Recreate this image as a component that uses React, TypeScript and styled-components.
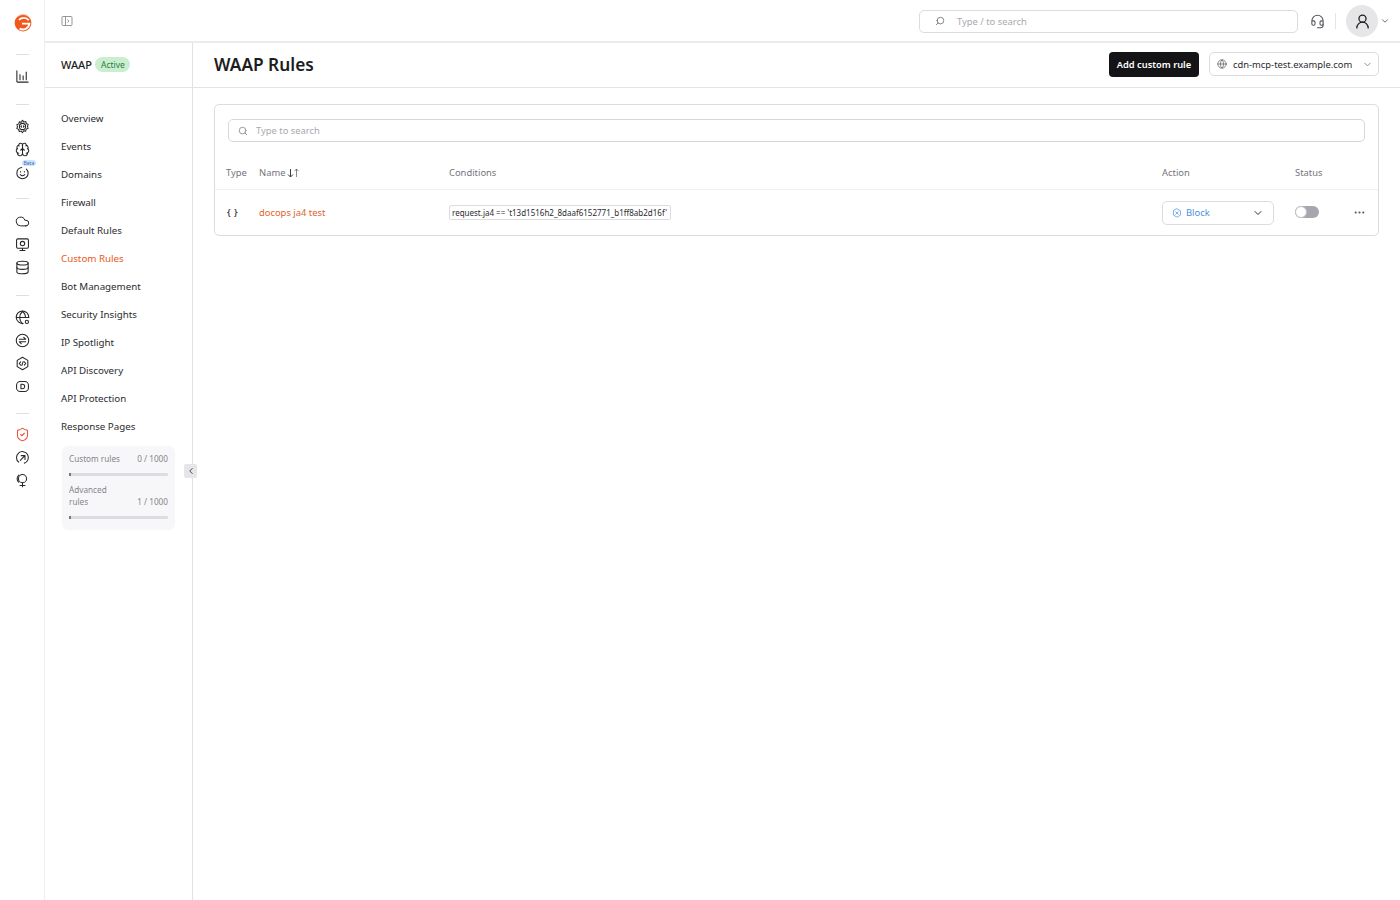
import React from "react";
import styled, { createGlobalStyle } from "styled-components";
import { Search, ChevronDown, ChevronLeft, Globe, Cloud, Database, ShieldCheck, Brain, UserRound, Headset, Ellipsis } from "lucide-react";

const Global = createGlobalStyle`
  html, body { margin: 0; padding: 0; background: #fff; }
  body { font-family: "Noto Sans", "Open Sans", sans-serif; color: #1d1d20; }
  #root { height: 900px; overflow: hidden; }
`;

const Page = styled.div`display: flex; height: 900px;`;
const Rail = styled.nav`
  flex: none; border-right: 1px solid #eeeef0;
  display: flex; flex-direction: column; align-items: center; padding: 12px 0 0 1px; box-sizing: border-box; width: 45px;
`;
const Logo = styled.div`height: 22px; display: flex; align-items: center; justify-content: center; margin-bottom: 20px;`;
const RailDivider = styled.div`width: 13px; height: 1px; background: #dfdfe2; flex: none;`;
const RailGroup = styled.div<{ $top: number; $bottom: number }>`
  display: flex; flex-direction: column; gap: 9px; align-items: center;
  padding: ${p => p.$top}px 0 ${p => p.$bottom}px;
`;
const RailIcon = styled.div<{ $active?: boolean }>`
  width: 14px; height: 14px; position: relative; color: ${p => (p.$active ? "#e8553a" : "#26262b")};
  display: flex; align-items: center; justify-content: center;
  svg { display: block; flex: none; }
`;
const BetaTag = styled.span`
  position: absolute; left: 6px; top: -5px; height: 6px; padding: 0 2px; border-radius: 3px;
  background: #cfe3fb; color: #2f6fc4; font-size: 5px; line-height: 6px;
`;

const Content = styled.div`flex: 1; min-width: 0; display: flex; flex-direction: column;`;
const TopBar = styled.header`
  height: 43px; flex: none; border-bottom: 2px solid #ebebed; display: flex; align-items: center;
  padding: 1px 10px 0 16px; box-sizing: border-box;
`;
const TopLeft = styled.div`flex: 1; color: #8b8b92; display: flex; align-items: center;`;
const GlobalSearch = styled.div`
  width: 379px; height: 23px; box-sizing: border-box; border: 1px solid #dcdce0; border-radius: 5px;
  display: flex; align-items: center; padding-left: 15px; gap: 12px; color: #6d6d74;
  font-size: 9.4px; margin-right: 12px;
`;
const Placeholder = styled.span`color: #a9a9b0;`;
const VLine = styled.div`width: 1px; height: 16px; background: #e4e4e7; margin: 0 10px 0 10px;`;
const Avatar = styled.div`
  width: 32px; height: 32px; border-radius: 50%; background: #e6e6e9; display: flex; align-items: center; justify-content: center;
  color: #1d1d20;
`;
const AvatarChevron = styled.div`display: flex; margin-left: 2px; color: #55555c;`;

const Body = styled.div`flex: 1; display: flex; min-height: 0;`;
const Side = styled.aside`
  width: 148px; flex: none; box-sizing: border-box; border-right: 1px solid #e2e2e5; position: relative; display: flex; flex-direction: column;
`;
const SideHead = styled.div`
  height: 45px; box-sizing: border-box; flex: none; border-bottom: 1px solid #e3e3e6; display: flex; align-items: center; padding: 0 0 2px 16px; gap: 3px;
`;
const SideTitle = styled.span`font-size: 11px; font-weight: 500; color: #1d1d20;`;
const Badge = styled.span`
  height: 15px; line-height: 15px; padding: 0 5px 0 6px; border-radius: 8px; background: #c9efcf; color: #2f7a46; font-size: 8.5px;
`;
const SideNav = styled.div`padding-top: 17px; display: flex; flex-direction: column;`;
const NavItem = styled.a<{ $active?: boolean }>`
  height: 28px; line-height: 27px; padding-left: 16px; font-size: 9.75px;
  color: ${p => (p.$active ? "#e8581c" : "#2b2b30")};
`;
const Usage = styled.div`
  margin: 5px 17px 0 17px; width: 113px; box-sizing: border-box; border-radius: 6px; background: #f7f7f9;
  padding: 7px 7px 11px 7px; display: flex; flex-direction: column; color: #85858c; font-size: 8.2px; line-height: 12px;
`;
const UsageRow = styled.div`display: flex; justify-content: space-between; align-items: flex-end; gap: 10px;`;
const UsageLabel = styled.span<{ $narrow?: boolean }>`width: ${p => (p.$narrow ? "44px" : "auto")};`;
const Track = styled.div<{ $gap: number }>`
  height: 3px; background: #dcdce2; border-radius: 1px; margin: 8px 0 ${p => p.$gap}px; position: relative;
  &::before { content: ""; position: absolute; left: 0; top: 0; width: 2px; height: 3px; background: #77777e; }
`;
const Collapse = styled.button`
  position: absolute; left: 139px; top: 421px; width: 13px; height: 14px; border: 0; padding: 0; border-radius: 2px;
  background: #e6e6e9; display: flex; align-items: center; justify-content: center; color: #2b2b30;
`;

const Main = styled.main`flex: 1; min-width: 0; display: flex; flex-direction: column;`;
const MainHead = styled.div`
  height: 45px; box-sizing: border-box; flex: none; border-bottom: 1px solid #e3e3e6; display: flex; align-items: center; padding: 0 21px 2px; 
`;
const Title = styled.h1`margin: 0; flex: 1; font-size: 17.3px; font-weight: 600; color: #1d1d20;`;
const AddBtn = styled.button`
  height: 25px; width: 90px; border: 0; border-radius: 4px; background: #141416; color: #fff;
  font: 600 9.3px "Noto Sans", sans-serif; padding: 0; margin-right: 10px;
`;
const DomainSelect = styled.div`
  width: 170px; height: 24px; box-sizing: border-box; border: 1px solid #dcdce0; border-radius: 5px; display: flex; align-items: center;
  padding: 0 5px 0 7px; gap: 6px; font-size: 9.4px; color: #2b2b30; white-space: nowrap;
  span { flex: 1; }
`;
const Wrap = styled.div`padding: 16px 21px;`;
const Card = styled.section`
  border: 1px solid #dcdce0; border-radius: 5px; height: 132px; box-sizing: border-box; padding-top: 14px;
`;
const TableSearch = styled.div`
  margin: 0 13px; height: 23px; box-sizing: border-box; border: 1px solid #d8d8dc; border-radius: 5px; display: flex; align-items: center;
  padding-left: 9px; gap: 8px; font-size: 9.4px; color: #85858c;
`;
const Cols = `grid-template-columns: 33px 190px 713px 133px 59px 1fr; padding-left: 11px;`;
const HeadRow = styled.div`
  ${Cols} display: grid; height: 48px; align-items: center; border-bottom: 1px solid #f1f1f3; box-sizing: border-box;
  padding-top: 14px; font-size: 9.4px; color: #75757c;
`;
const NameHead = styled.span`display: flex; align-items: center; gap: 2px;`;
const SortArrows = styled.svg`display: block; color: #3a3a40;`;
const Row = styled.div`${Cols} display: grid; height: 45px; align-items: center; font-size: 9.4px;`;
const TypeCell = styled.span`font-size: 9.5px; font-weight: 500; color: #2b2b30; padding-left: 1px; word-spacing: 1px;`;
const RuleName = styled.span`color: #e0642a;`;
const Cond = styled.span`
  justify-self: start; height: 15px; line-height: 13px; box-sizing: border-box; width: 222px; white-space: nowrap; overflow: hidden;
  border: 1px solid #dcdce0; border-radius: 2px; padding: 0 2px; font-size: 8px; color: #2b2b30;
`;
const ActionSelect = styled.div`
  width: 112px; height: 24px; box-sizing: border-box; border: 1px solid #dcdce0; border-radius: 5px; display: flex; align-items: center;
  padding: 0 9px; gap: 4px; color: #4a8fe0; font-size: 9.4px;
  span { flex: 1; }
`;
const Toggle = styled.div`
  width: 24px; height: 12px; border-radius: 6px; background: #a8a5ae; position: relative; margin-bottom: 1px;
  &::before { content: ""; position: absolute; left: 0; top: 0; width: 12px; height: 12px; box-sizing: border-box; border-radius: 50%; background: #fff; border: 1px solid #c4c2c9; }
`;
const More = styled.div`display: flex; color: #55555c; margin-left: -1px;`;

const Ic = ({ children, s = 15 }: { children: React.ReactNode; s?: number }) => (
  <svg width={s} height={s} viewBox="0 0 24 24" fill="none" stroke="currentColor" strokeWidth="1.7" strokeLinecap="round" strokeLinejoin="round">{children}</svg>
);

const LogoMark = () => (
  <svg width="18" height="20" viewBox="0 0 18 20" fill="none">
    <circle cx="9" cy="10" r="8.4" fill="#f0591e" />
    <path d="M4.4 3.2 A8 8 0 0 1 14.6 3.6" stroke="#fbc6ae" strokeWidth="0.8" />
    <path d="M14.8 7.2 A6.6 6.6 0 0 0 5 6.8" stroke="#fff" strokeWidth="1.7" />
    <path d="M8 10.6 H15.4 A6.6 6.6 0 0 1 5.6 15.6" stroke="#fff" strokeWidth="1.8" />
  </svg>
);

const navItems = ["Overview", "Events", "Domains", "Firewall", "Default Rules", "Custom Rules", "Bot Management", "Security Insights", "IP Spotlight", "API Discovery", "API Protection", "Response Pages"];

export default function App() {
  return (
    <Page>
      <Global />
      <Rail>
        <Logo><LogoMark /></Logo>
        <RailDivider />
        <RailGroup $top={14} $bottom={21}>
          <RailIcon><Ic><path d="M3 3v17a1 1 0 0 0 1 1h17" /><path d="M8 17V9" /><path d="M13 17v-6" /><path d="M18 17V5" /></Ic></RailIcon>
        </RailGroup>
        <RailDivider />
        <RailGroup $top={14} $bottom={19}>
          <RailIcon><Ic><path d="M12 2l2 2.6 3.2-.6.8 3.2 3 1.4-1 3.1 1 3.1-3 1.4-.8 3.2-3.2-.6L12 22l-2-2.6-3.2.6-.8-3.2-3-1.4 1-3.1-1-3.1 3-1.4.8-3.2 3.2.6z" strokeDasharray="5 1.5" /><circle cx="12" cy="12" r="5" /><path d="M10.5 11l-1 1 1 1M13.5 11l1 1-1 1" /></Ic></RailIcon>
          <RailIcon><Brain size={15} strokeWidth={1.7} /></RailIcon>
          <RailIcon>
            <Ic><circle cx="12" cy="13" r="9" strokeDasharray="40 8" /><path d="M8.5 15.5c2 2 5 2 7 0" /><path d="M9 10.5v.5M15 10.5v.5" /></Ic>
            <BetaTag>Beta</BetaTag>
          </RailIcon>
        </RailGroup>
        <RailDivider />
        <RailGroup $top={15} $bottom={21}>
          <RailIcon><Cloud size={15} strokeWidth={1.6} /></RailIcon>
          <RailIcon><Ic><rect x="2.5" y="3" width="19" height="15" rx="2" /><circle cx="12" cy="10.5" r="3.5" /><path d="M8 21.5h8M12 18v3" /></Ic></RailIcon>
          <RailIcon><Database size={15} strokeWidth={1.7} /></RailIcon>
        </RailGroup>
        <RailDivider />
        <RailGroup $top={14} $bottom={20}>
          <RailIcon><Ic><path d="M13 21.5A10 10 0 1 1 22 12" /><path d="M2 12h20M12 2c-6 6-6 14 0 20M12 2c3.5 3.5 5 8 4.5 10" /><circle cx="19" cy="19" r="2.6" /></Ic></RailIcon>
          <RailIcon><Ic><circle cx="12" cy="12" r="10" /><path d="M7 10h10l-3-3" /><path d="M17 14H7l3 3" /></Ic></RailIcon>
          <RailIcon><Ic><path d="M12 2l8.5 5v10L12 22l-8.5-5V7z" /><path d="M9 9.5L6.8 12 9 14.5M15 9.5l2.2 2.5-2.2 2.5M13 9l-2 6" /></Ic></RailIcon>
          <RailIcon><Ic><rect x="2.5" y="4" width="19" height="16" rx="6" /><path d="M9.5 8.5h2.5a3.5 3.5 0 0 1 0 7H9.5z" /></Ic></RailIcon>
        </RailGroup>
        <RailDivider />
        <RailGroup $top={13} $bottom={0}>
          <RailIcon $active><ShieldCheck size={15} strokeWidth={1.7} /></RailIcon>
          <RailIcon><Ic><path d="M6 19.5A9.5 9.5 0 1 1 15 21" /><path d="M8.5 16.5L16 9M10 9h6v6" /></Ic></RailIcon>
          <RailIcon><Ic><circle cx="12" cy="9" r="6.5" /><path d="M12 15.5V22M8 20h8" /><path d="M6 3.5c-3.5 3.5-3.5 8 0 11" /></Ic></RailIcon>
        </RailGroup>
      </Rail>
      <Content>
        <TopBar>
          <TopLeft>
            <svg width="12" height="12" viewBox="0 0 12 12" fill="none" stroke="currentColor" strokeWidth="0.9"><rect x="1" y="1.5" width="10" height="9" rx="1" /><path d="M4.5 1.5v9M6.5 4.5L8 6 6.5 7.5" /></svg>
          </TopLeft>
          <GlobalSearch>
            <Search size={10} style={{ transform: "scaleX(-1)" }} />
            <Placeholder>Type / to search</Placeholder>
          </GlobalSearch>
          <Headset size={15} strokeWidth={1.7} color="#55555c" />
          <VLine />
          <Avatar><UserRound size={17} strokeWidth={1.8} /></Avatar>
          <AvatarChevron><ChevronDown size={10} /></AvatarChevron>
        </TopBar>
        <Body>
          <Side>
            <SideHead>
              <SideTitle>WAAP</SideTitle>
              <Badge>Active</Badge>
            </SideHead>
            <SideNav>
              {navItems.map(n => <NavItem key={n} $active={n === "Custom Rules"}>{n}</NavItem>)}
            </SideNav>
            <Usage>
              <UsageRow><UsageLabel>Custom rules</UsageLabel><span>0 / 1000</span></UsageRow>
              <Track $gap={8} />
              <UsageRow><UsageLabel $narrow>Advanced rules</UsageLabel><span>1 / 1000</span></UsageRow>
              <Track $gap={0} />
            </Usage>
            <Collapse><ChevronLeft size={10} /></Collapse>
          </Side>
          <Main>
            <MainHead>
              <Title>WAAP Rules</Title>
              <AddBtn>Add custom rule</AddBtn>
              <DomainSelect>
                <Globe size={10} color="#6d6d74" />
                <span>cdn-mcp-test.example.com</span>
                <ChevronDown size={11} color="#85858c" />
              </DomainSelect>
            </MainHead>
            <Wrap>
              <Card>
                <TableSearch>
                  <Search size={10} />
                  <Placeholder>Type to search</Placeholder>
                </TableSearch>
                <HeadRow>
                  <span>Type</span>
                  <NameHead>
                    Name
                    <SortArrows width="13" height="10" viewBox="0 0 13 10" fill="none" stroke="currentColor" strokeWidth="1">
                      <path d="M3.5 1v8M1 6.5L3.5 9 6 6.5" />
                      <path d="M9.5 9V1M7.5 3.2L9.5 1l2 2.2" opacity=".6" />
                    </SortArrows>
                  </NameHead>
                  <span>Conditions</span>
                  <span>Action</span>
                  <span>Status</span>
                  <span />
                </HeadRow>
                <Row>
                  <TypeCell>{"{ }"}</TypeCell>
                  <RuleName>docops ja4 test</RuleName>
                  <Cond>request.ja4 == 't13d1516h2_8daaf6152771_b1ff8ab2d16f'</Cond>
                  <ActionSelect>
                    <Ic s={10}><path d="M12 2l8.5 5v10L12 22l-8.5-5V7z" /><path d="M9 9l6 6M15 9l-6 6" /></Ic>
                    <span>Block</span>
                    <ChevronDown size={12} color="#2b2b30" />
                  </ActionSelect>
                  <Toggle />
                  <More><Ellipsis size={13} /></More>
                </Row>
              </Card>
            </Wrap>
          </Main>
        </Body>
      </Content>
    </Page>
  );
}
